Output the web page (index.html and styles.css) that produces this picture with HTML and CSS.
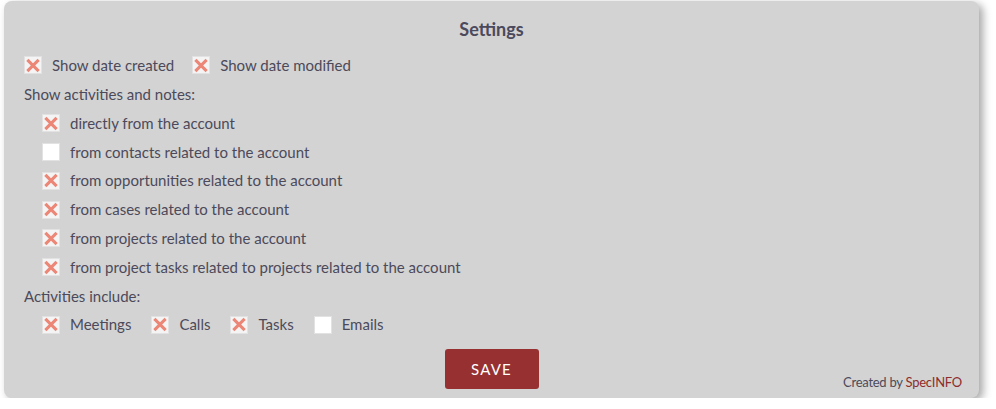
FILE: index.html
```html
<!DOCTYPE html>
<html>
<head>
<meta charset="utf-8">
<link rel="stylesheet" href="styles.css">
</head>
<body>
<div class="panel">
  <h1 class="title">Settings</h1>
  <div class="row">
    <label class="opt"><span class="cb checked"></span>Show date created</label>
    <label class="opt"><span class="cb checked"></span>Show date modified</label>
  </div>
  <div class="label">Show activities and notes:</div>
  <div class="list">
    <label class="opt"><span class="cb checked"></span>directly from the account</label>
    <label class="opt"><span class="cb"></span>from contacts related to the account</label>
    <label class="opt"><span class="cb checked"></span>from opportunities related to the account</label>
    <label class="opt"><span class="cb checked"></span>from cases related to the account</label>
    <label class="opt"><span class="cb checked"></span>from projects related to the account</label>
    <label class="opt"><span class="cb checked"></span>from project tasks related to projects related to the account</label>
  </div>
  <div class="label">Activities include:</div>
  <div class="row indent">
    <label class="opt"><span class="cb checked"></span>Meetings</label>
    <label class="opt"><span class="cb checked"></span>Calls</label>
    <label class="opt"><span class="cb checked"></span>Tasks</label>
    <label class="opt"><span class="cb"></span>Emails</label>
  </div>
  <div class="footer">
    <button class="save">SAVE</button>
    <div class="credit">Created by <span class="brand">SpecINFO</span></div>
  </div>
</div>
</body>
</html>
```

FILE: styles.css
```css
html, body {
  margin: 0;
  padding: 0;
  background: #ffffff;
}
body {
  font-family: Lato, "Open Sans", sans-serif;
  color: #4c4a5a;
}
.panel {
  box-sizing: border-box;
  margin: 1px 0 0 4px;
  width: 975px;
  height: 397px;
  background: #d3d3d3;
  border-radius: 8px;
  box-shadow: 4px 3px 9px rgba(0,0,0,0.35);
  padding: 14px 20px 0 20px;
  position: relative;
}
.title {
  margin: 0;
  text-align: center;
  font-size: 18px;
  font-weight: 700;
  line-height: 28px;
  color: #4b4a5c;
}
.row {
  display: flex;
  gap: 18px;
  margin-top: 8px;
  height: 29px;
  align-items: center;
}
.opt {
  display: flex;
  align-items: center;
  font-size: 15px;
  line-height: 28.8px;
  height: 28.8px;
}
.cb {
  box-sizing: border-box;
  width: 18px;
  height: 18px;
  margin-right: 10px;
  background: #ffffff;
  border: 1px solid #e2e2e2;
  position: relative;
  flex: none;
}
.cb.checked {
  background: #f4f4f4;
}
.cb.checked::before,
.cb.checked::after {
  content: "";
  position: absolute;
  left: 0px;
  top: 6.5px;
  width: 16px;
  height: 3px;
  background: #ec8676;
  transform: rotate(45deg);
}
.cb.checked::after {
  transform: rotate(-45deg);
}
.label {
  font-size: 15px;
  line-height: 28.8px;
  height: 28.8px;
}
.list {
  display: flex;
  flex-direction: column;
  padding-left: 18px;
}
.indent {
  margin-top: 0;
  padding-left: 18px;
  gap: 20px;
}
.footer {
  display: flex;
  justify-content: center;
  margin-top: 10px;
  position: relative;
}
.save {
  width: 94px;
  height: 40px;
  border: none;
  border-radius: 3px;
  background: #973131;
  color: #ffffff;
  font-family: Lato, sans-serif;
  font-size: 15px;
  letter-spacing: 1.2px;
  padding: 0;
}
.credit {
  position: absolute;
  right: -3px;
  bottom: -1px;
  font-size: 13px;
  color: #4c4a5a;
  letter-spacing: -0.25px;
}
.brand {
  color: #8f2c2c;
}
```
